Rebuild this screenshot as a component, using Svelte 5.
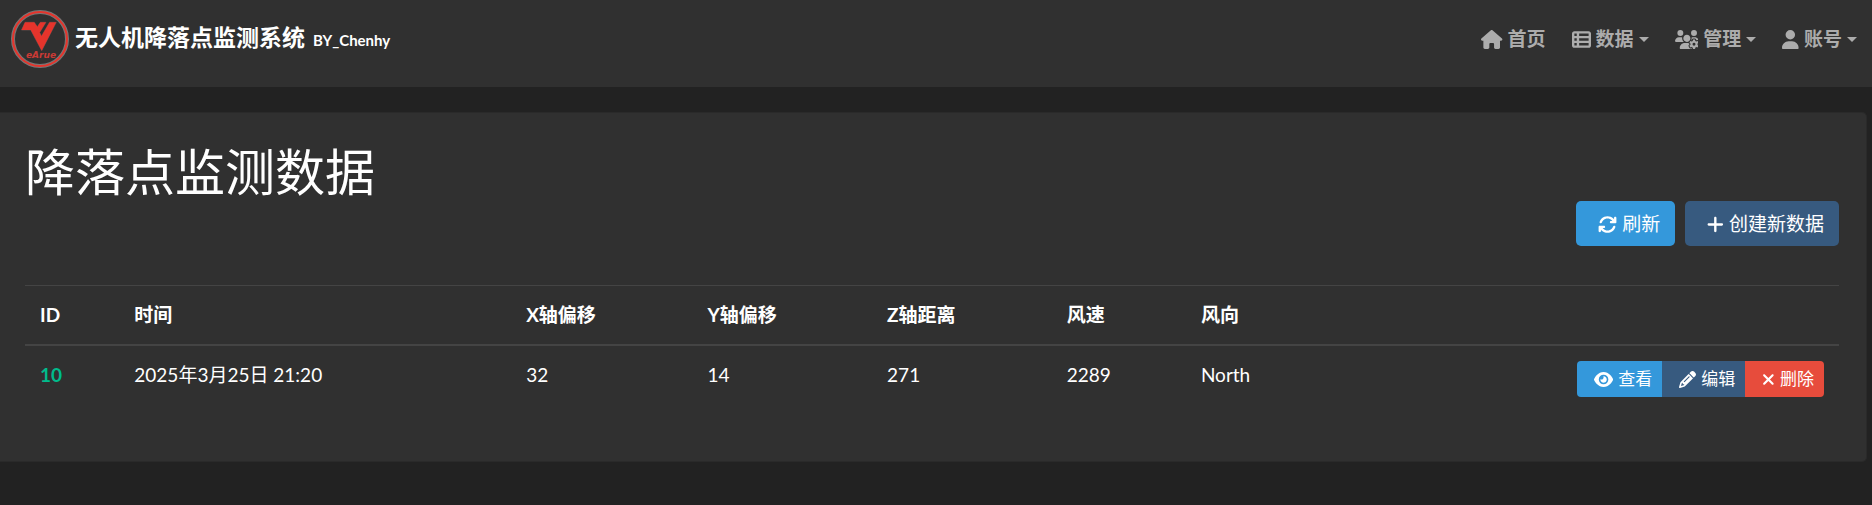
<script>
  const glyphs = {
    house: { w: 576, d: 'M575.8 255.5c0 18-15 32.1-32 32.1h-32l.7 160.2c0 2.7-.2 5.4-.5 8.1V472c0 22.1-17.9 40-40 40H456c-1.1 0-2.2 0-3.3-.1c-1.4 .1-2.8 .1-4.2 .1H416 392c-22.1 0-40-17.9-40-40V448 384c0-17.7-14.3-32-32-32H256c-17.7 0-32 14.3-32 32v64 24c0 22.1-17.9 40-40 40H160 128.1c-1.5 0-3-.1-4.5-.2c-1.2 .1-2.4 .2-3.6 .2H104c-22.1 0-40-17.9-40-40V360c0-.9 0-1.9 .1-2.8V287.6H32c-18 0-32-14-32-32.1c0-9 3-17 10-24L266.4 8c7-7 15-8 22-8s15 2 21 7L564.8 231.5c8 7 12 15 11 24z' },
    list: { w: 512, d: 'M0 96C0 60.7 28.7 32 64 32H448c35.3 0 64 28.7 64 64V416c0 35.3-28.7 64-64 64H64c-35.3 0-64-28.7-64-64V96zm64 0v64h64V96H64zm384 0H192v64H448V96zM64 224v64h64V224H64zm384 0H192v64H448V224zM64 352v64h64V352H64zm384 0H192v64H448V352z' },
    users: { w: 640, d: 'M144 160A80 80 0 1 0 144 0a80 80 0 1 0 0 160zm368 0A80 80 0 1 0 512 0a80 80 0 1 0 0 160zM0 298.7C0 310.4 9.6 320 21.3 320H234.7c.2 0 .4 0 .7 0c-26.6-23.5-43.3-57.8-43.3-96c0-7.6 .7-15 1.9-22.3c-13.6-6.3-28.7-9.7-44.6-9.7H106.7C47.8 192 0 239.8 0 298.7zM320 320c24 0 45.9-8.8 62.7-23.3c2.5-3.7 5.2-7.3 8-10.7c2.7-3.3 5.7-6.1 9-8.3C410 262.3 416 243.9 416 224c0-53-43-96-96-96s-96 43-96 96s43 96 96 96zm65.4 60.2c-10.3-5.9-18.1-16.2-20.8-28.2H261.3C187.7 352 128 411.7 128 485.3c0 14.7 11.9 26.7 26.7 26.7H455.2c-2.1-5.2-3.2-10.9-3.2-16.4v-3c-1.3-.7-2.7-1.5-4-2.3l-2.6 1.5c-16.8 9.7-40.5 8-54.7-9.7c-4.5-5.6-8.6-11.5-12.4-17.6l-.1-.2-.1-.2-2.4-4.1-.1-.2-.1-.2c-3.4-6.2-6.4-12.6-9-19.3c-8.2-21.2 2.2-42.6 19-52.3l2.7-1.5c0-.8 0-1.5 0-2.3s0-1.5 0-2.3l-2.7-1.5zM533.3 192H490.7c-15.9 0-31 3.5-44.6 9.7c1.3 7.2 1.9 14.7 1.9 22.3c0 17.4-3.5 33.9-9.7 49c2.5 .9 4.9 2 7.1 3.3l2.6 1.5c1.3-.8 2.6-1.6 4-2.3v-3c0-19.4 13.3-39.1 35.8-42.6c7.9-1.2 16-1.9 24.2-1.9s16.3 .6 24.2 1.9c22.5 3.5 35.8 23.2 35.8 42.6v3c1.3 .7 2.7 1.5 4 2.3l2.6-1.5c16.8-9.7 40.5-8 54.7 9.7c2.3 2.8 4.5 5.8 6.6 8.7c-2.1-57.1-49-102.7-106.6-102.7zm91.3 163.9c6.3-3.6 9.5-11.1 6.8-18c-2.1-5.5-4.6-10.8-7.4-15.9l-2.3-4c-3.1-5.1-6.5-9.9-10.2-14.5c-4.6-5.7-12.7-6.7-19-3L574.4 311c-8.9-7.6-19.1-13.6-30.4-17.6v-21c0-7.3-4.9-13.8-12.1-14.9c-6.5-1-13.1-1.5-19.9-1.5s-13.4 .5-19.9 1.5c-7.2 1.1-12.1 7.6-12.1 14.9v21c-11.2 4-21.5 10-30.4 17.6l-18.2-10.5c-6.3-3.6-14.4-2.6-19 3c-3.7 4.6-7.1 9.5-10.2 14.6l-2.3 3.9c-2.8 5.1-5.3 10.4-7.4 15.9c-2.6 6.8 .5 14.3 6.8 17.9l18.2 10.5c-1 5.7-1.6 11.6-1.6 17.6s.6 11.9 1.6 17.5l-18.2 10.5c-6.3 3.6-9.5 11.1-6.8 17.9c2.1 5.5 4.6 10.7 7.4 15.8l2.4 4.1c3 5.1 6.4 9.9 10.1 14.5c4.6 5.7 12.7 6.7 19 3L449.6 457c8.9 7.6 19.2 13.6 30.4 17.6v21c0 7.3 4.9 13.8 12.1 14.9c6.5 1 13.1 1.5 19.9 1.5s13.4-.5 19.9-1.5c7.2-1.1 12.1-7.6 12.1-14.9v-21c11.2-4 21.5-10 30.4-17.6l18.2 10.5c6.3 3.6 14.4 2.6 19-3c3.7-4.6 7.1-9.4 10.1-14.5l2.4-4.2c2.8-5.1 5.3-10.3 7.4-15.8c2.6-6.8-.5-14.3-6.8-17.9l-18.2-10.5c1-5.7 1.6-11.6 1.6-17.5s-.6-11.9-1.6-17.6l18.2-10.5zM472 384a40 40 0 1 1 80 0 40 40 0 1 1 -80 0z' },
    user: { w: 448, d: 'M224 256A128 128 0 1 0 224 0a128 128 0 1 0 0 256zm-45.7 48C79.8 304 0 383.8 0 482.3C0 498.7 13.3 512 29.7 512H418.3c16.4 0 29.7-13.3 29.7-29.7C448 383.8 368.2 304 269.7 304H178.3z' },
    rotate: { w: 512, d: 'M105.1 202.6c7.7-21.8 20.2-42.3 37.8-59.8c62.5-62.5 163.8-62.5 226.3 0L386.3 160H352c-17.7 0-32 14.3-32 32s14.3 32 32 32H463.5c0 0 0 0 0 0h.4c17.7 0 32-14.3 32-32V80c0-17.7-14.3-32-32-32s-32 14.3-32 32v35.2L414.4 97.6c-87.5-87.5-229.3-87.5-316.8 0C73.2 122 55.6 150.7 44.8 181.4c-5.9 16.7 2.9 34.9 19.5 40.8s34.9-2.9 40.8-19.5zM39 289.3c-5 1.5-9.8 4.2-13.7 8.2c-4 4-6.7 8.8-8.1 14c-.3 1.2-.6 2.5-.8 3.8c-.3 1.7-.4 3.4-.4 5.1V432c0 17.7 14.3 32 32 32s32-14.3 32-32V396.9l17.6 17.5 0 0c87.5 87.4 229.3 87.4 316.7 0c24.4-24.4 42.1-53.1 52.9-83.7c5.9-16.7-2.9-34.9-19.5-40.8s-34.9 2.9-40.8 19.5c-7.7 21.8-20.2 42.3-37.8 59.8c-62.5 62.5-163.8 62.5-226.3 0l-.1-.1L125.6 352H160c17.7 0 32-14.3 32-32s-14.3-32-32-32H48.4c-1.6 0-3.2 .1-4.8 .3s-3.1 .5-4.6 1z' },
    plus: { w: 448, d: 'M256 80c0-17.7-14.3-32-32-32s-32 14.3-32 32V224H48c-17.7 0-32 14.3-32 32s14.3 32 32 32H192V432c0 17.7 14.3 32 32 32s32-14.3 32-32V288H400c17.7 0 32-14.3 32-32s-14.3-32-32-32H256V80z' },
    eye: { w: 576, d: 'M288 32c-80.8 0-145.5 36.8-192.6 80.6C48.6 156 17.3 208 2.5 243.7c-3.3 7.9-3.3 16.7 0 24.6C17.3 304 48.6 356 95.4 399.4C142.5 443.2 207.2 480 288 480s145.5-36.8 192.6-80.6c46.8-43.5 78.1-95.4 93-131.1c3.3-7.9 3.3-16.7 0-24.6c-14.9-35.7-46.2-87.7-93-131.1C433.5 68.8 368.8 32 288 32zM144 256a144 144 0 1 1 288 0 144 144 0 1 1 -288 0zm144-64c0 35.3-28.7 64-64 64c-7.1 0-13.9-1.2-20.3-3.3c-5.5-1.8-11.9 1.6-11.7 7.4c.3 6.9 1.3 13.8 3.2 20.7c13.7 51.2 66.4 81.6 117.6 67.9s81.6-66.4 67.9-117.6c-11.1-41.5-47.8-69.4-88.6-71.1c-5.8-.2-9.2 6.1-7.4 11.7c2.1 6.4 3.3 13.2 3.3 20.3z' },
    pencil: { w: 512, d: 'M410.3 231l11.3-11.3-33.9-33.9-62.1-62.1L291.7 89.8l-11.3 11.3-22.6 22.6L58.6 322.9c-10.4 10.4-18 23.3-22.2 37.4L1 480.7c-2.5 8.4-.2 17.5 6.1 23.7s15.3 8.5 23.7 6.1l120.3-35.4c14.1-4.2 27-11.8 37.4-22.2L387.7 253.7 410.3 231zM160 399.4l-9.1 22.7c-4 3.1-8.5 5.4-13.3 6.9L59.4 452l23-78.1c1.4-4.9 3.8-9.4 6.9-13.3l22.7-9.1v32c0 8.8 7.2 16 16 16h32zM362.7 18.7L348.3 33.2 325.7 55.8 314.3 67.1l33.9 33.9 62.1 62.1 33.9 33.9 11.3-11.3 22.6-22.6 14.5-14.5c25-25 25-65.5 0-90.5L453.3 18.7c-25-25-65.5-25-90.5 0zm-47.4 168l-144 144c-6.2 6.2-16.4 6.2-22.6 0s-6.2-16.4 0-22.6l144-144c6.2-6.2 16.4-6.2 22.6 0s6.2 16.4 0 22.6z' },
    xmark: { w: 384, d: 'M342.6 150.6c12.5-12.5 12.5-32.8 0-45.3s-32.8-12.5-45.3 0L192 210.7 86.6 105.4c-12.5-12.5-32.8-12.5-45.3 0s-12.5 32.8 0 45.3L146.7 256 41.4 361.4c-12.5 12.5-12.5 32.8 0 45.3s32.8 12.5 45.3 0L192 301.3 297.4 406.6c12.5 12.5 32.8 12.5 45.3 0s12.5-32.8 0-45.3L237.3 256 342.6 150.6z' }
  };

  const nav = [
    { icon: 'house', label: '首页', menu: false },
    { icon: 'list', label: '数据', menu: true },
    { icon: 'users', label: '管理', menu: true },
    { icon: 'user', label: '账号', menu: true }
  ];

  const columns = ['ID', '时间', 'X轴偏移', 'Y轴偏移', 'Z轴距离', '风速', '风向'];

  const rows = [
    { id: 10, cells: ['2025年3月25日 21:20', '32', '14', '271', '2289', 'North'] }
  ];
</script>

{#snippet icon(name)}
  <svg class="icon" viewBox="0 0 {glyphs[name].w} 512" aria-hidden="true"><path d={glyphs[name].d} /></svg>
{/snippet}

<header class="navbar">
  <a class="brand" href="#home">
    <svg class="logo" viewBox="0 0 60 60" aria-hidden="true">
      <circle class="halo" cx="30" cy="30" r="27" />
      <circle class="ring" cx="30" cy="30" r="27" />
      <path class="mark" d="M15 13.300H24.300L27.300 17.700L30.300 13.300H36L29.700 23.500L31.500 27L39.500 13.300H46.300L31.700 41.700L20.700 21H11.500Z" />
      <text class="mark-text" x="31" y="49" text-anchor="middle">eArue</text>
    </svg>
    <span class="brand-name">无人机降落点监测系统</span>
    <small>BY_Chenhy</small>
  </a>
  <nav>
    {#each nav as item}
      {#if item.menu}
        <button class="nav-link" type="button" aria-haspopup="true">{@render icon(item.icon)}<span>{item.label}</span><i class="caret"></i></button>
      {:else}
        <a class="nav-link" href="#home">{@render icon(item.icon)}<span>{item.label}</span></a>
      {/if}
    {/each}
  </nav>
</header>

<main class="card">
  <h1>降落点监测数据</h1>
  <div class="toolbar">
    <button class="btn info" type="button">{@render icon('rotate')}<span>刷新</span></button>
    <button class="btn primary" type="button">{@render icon('plus')}<span>创建新数据</span></button>
  </div>
  <table>
    <colgroup>
      <col class="c-id" /><col class="c-time" /><col class="c-x" /><col class="c-y" /><col class="c-z" /><col class="c-speed" /><col />
    </colgroup>
    <thead>
      <tr>
        {#each columns as column, i}
          <th scope="col" colspan={i === columns.length - 1 ? 2 : 1}>{column}</th>
        {/each}
      </tr>
    </thead>
    <tbody>
      {#each rows as row}
        <tr>
          <td><a class="id" href="#detail">{row.id}</a></td>
          {#each row.cells as cell}
            <td>{cell}</td>
          {/each}
          <td>
            <div class="group">
              <button class="btn small info" type="button">{@render icon('eye')}<span>查看</span></button>
              <button class="btn small primary" type="button">{@render icon('pencil')}<span>编辑</span></button>
              <button class="btn small danger" type="button">{@render icon('xmark')}<span>删除</span></button>
            </div>
          </td>
        </tr>
      {/each}
    </tbody>
  </table>
</main>

<style>
  :global(body) {
    background: #222;
    color: #fff;
    font: 19px/28px Lato, "Noto Sans CJK SC", sans-serif;
  }
  a { color: inherit; text-decoration: none; }
  button { font: inherit; color: inherit; border: 0; background: none; cursor: pointer; }
  .icon { height: 1em; width: auto; flex: none; fill: currentColor; }

  .navbar {
    display: flex;
    align-items: flex-start;
    justify-content: space-between;
    padding: 9px 15px 18px 10px;
    background: #303030;
  }
  .brand { display: flex; align-items: baseline; gap: 8px; font-weight: 700; }
  .logo { width: 60px; height: 60px; align-self: center; margin-right: -3px; }
  .halo { fill: none; stroke: #777; stroke-width: 4; }
  .ring { fill: none; stroke: #e5342c; stroke-width: 2; }
  .mark { fill: #e5342c; stroke: #5c4846; stroke-width: 1; paint-order: stroke; }
  .mark-text { fill: #c93a35; font: italic 900 10px "DejaVu Sans", sans-serif; font-size: 9px; }
  .brand-name { font-size: 23px; line-height: 56px; }
  .brand small { font-size: 15px; }

  nav { display: flex; gap: 26px; padding-top: 16px; }
  .nav-link {
    display: flex;
    align-items: center;
    gap: 5px;
    padding: 0;
    font-weight: 700;
    color: #acacac;
  }
  .caret {
    border: 5px solid transparent;
    border-top-color: currentColor;
    border-bottom: 0;
  }

  .card {
    margin: 25px 5px 43px 0;
    padding: 31px 27px 49px 25px;
    border: 1px solid #2a2a2a;
    border-left: 0;
    border-radius: 0 5px 5px 0;
    background: #303030;
  }
  h1 { margin: 0; font-size: 50px; line-height: 57px; font-weight: 400; }
  .toolbar { display: flex; justify-content: flex-end; gap: 10px; margin-bottom: 39px; }
  .btn {
    display: flex;
    align-items: center;
    gap: 5px;
    padding: 9px 15px 8px 22px;
    border-radius: 5px;
  }
  .info { background: #3498db; }
  .primary { background: #375a7f; }
  .danger { background: #e74c3c; }

  table { width: 100%; table-layout: fixed; border-collapse: collapse; }
  th, td { padding: 15px; text-align: left; vertical-align: top; border-top: 1px solid #444; }
  thead th { border-bottom: 2px solid #444; font-weight: 700; }
  .c-id { width: 5.2%; }
  .c-time { width: 21.6%; }
  .c-x { width: 10%; }
  .c-y, .c-z { width: 9.9%; }
  .c-speed { width: 7.4%; }
  .id { color: #00bc8c; font-weight: 700; }
  .group { display: flex; justify-content: flex-end; }
  .small { padding: 5px 10px 5px 17px; font-size: 17px; line-height: 26px; border-radius: 0; }
  .small:first-child { border-radius: 4px 0 0 4px; }
  .small:last-child { border-radius: 0 4px 4px 0; }
</style>
